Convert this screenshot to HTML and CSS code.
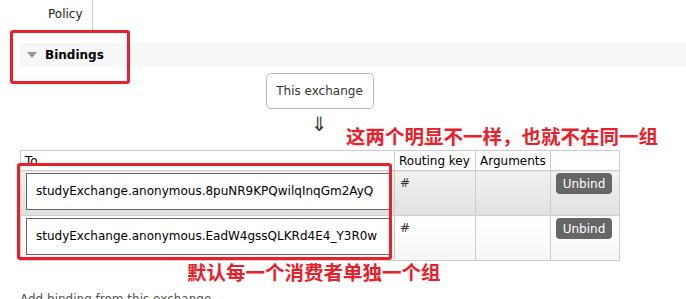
FILE: index.html
```html
<!DOCTYPE html>
<html lang="zh-CN">
<head>
    <meta charset="UTF-8">
    <title>Bindings</title>
    <link rel="stylesheet" href="styles.css">
</head>
<body>
    <div class="page">
        <div class="top-row">
            <div class="policy-cell">Policy</div>
        </div>

        <div class="section-head">
            <span class="arrow-down"></span>
            <span class="section-title">Bindings</span>
        </div>

        <div class="bindings">
            <div class="source">
                <div class="exchange-box">This exchange</div>
                <div class="flow-arrow">⇓</div>
            </div>

            <table class="list">
                <thead>
                    <tr>
                        <th class="col-to">To</th>
                        <th class="col-key">Routing key</th>
                        <th class="col-args">Arguments</th>
                        <th class="col-act"></th>
                    </tr>
                </thead>
                <tbody>
                    <tr class="alt1">
                        <td><span class="queue-box">studyExchange.anonymous.8puNR9KPQwilqInqGm2AyQ</span></td>
                        <td>#</td>
                        <td></td>
                        <td><button class="unbind">Unbind</button></td>
                    </tr>
                    <tr class="alt2">
                        <td><span class="queue-box">studyExchange.anonymous.EadW4gssQLKRd4E4_Y3R0w</span></td>
                        <td>#</td>
                        <td></td>
                        <td><button class="unbind">Unbind</button></td>
                    </tr>
                </tbody>
            </table>

            <div class="add-binding">Add binding from this exchange</div>
        </div>

        <!-- 標註 -->
        <div class="mark mark-head"></div>
        <div class="mark mark-queues"></div>
        <div class="note note-top">这两个明显不一样，也就不在同一组</div>
        <div class="note note-bottom">默认每一个消费者单独一个组</div>
    </div>
</body>
</html>
```

FILE: styles.css
```css
body {
    margin: 0;
    font-family: "DejaVu Sans", Verdana, sans-serif;
    font-size: 12px;
    color: #000;
    background: #fff;
    overflow: hidden;
}
.page {
    position: relative;
    width: 686px;
    height: 299px;
}
.top-row {
    height: 30px;
}
.policy-cell {
    width: 93px;
    height: 30px;
    padding-left: 48px;
    padding-top: 7px;
    box-sizing: border-box;
    border-right: 1px solid #ccc;
    color: #222;
}
.section-head {
    margin: 13px 0 0 20px;
    height: 24px;
    background: #f7f7f7;
    display: flex;
    align-items: center;
}
.arrow-down {
    width: 0;
    height: 0;
    margin-left: 7px;
    border-left: 5px solid transparent;
    border-right: 5px solid transparent;
    border-top: 6px solid #999;
}
.section-title {
    font-weight: bold;
    margin-left: 8px;
}
.bindings {
    margin-left: 20px;
    width: 599px;
}
.source {
    display: flex;
    flex-direction: column;
    align-items: center;
    padding-top: 6px;
}
.exchange-box {
    width: 108px;
    height: 36px;
    box-sizing: border-box;
    border: 1px solid #bbb;
    border-radius: 5px;
    display: flex;
    align-items: center;
    justify-content: center;
    color: #333;
}
.flow-arrow {
    font-size: 20px;
    line-height: 24px;
    padding-top: 3px;
    height: 38px;
    color: #333;
}
.list {
    border-collapse: collapse;
    width: 600px;
}
.list th {
    font-weight: normal;
    text-align: left;
    height: 19px;
    padding: 0 4px;
    border: 1px solid #ccc;
    color: #000;
}
.col-to { width: 365px; }
.col-key { width: 72px; }
.col-args { width: 66px; }
.list td {
    border: 1px solid #ccc;
    vertical-align: top;
    padding: 2px 4px 5px 5px;
}
.list tr.alt1 td {
    background: linear-gradient(#f2f2f2, #e0e0e0);
}
.list tr.alt2 td {
    background: linear-gradient(#fff, #f6f6f6);
}
.list td:first-child {
    padding: 2px 0 5px 5px;
}
.queue-box {
    display: block;
    height: 37px;
    box-sizing: border-box;
    border: 1px solid #666;
    background: #fff;
    padding: 10px 0 0 9px;
    margin-right: 3px;
    color: #000;
    white-space: nowrap;
}
.list td:nth-child(2) {
    padding-top: 5px;
    color: #333;
}
.unbind {
    display: block;
    font-family: "DejaVu Sans", Verdana, sans-serif;
    font-size: 12px;
    background: #666;
    color: #fff;
    border: none;
    border-radius: 4px;
    width: 56px;
    height: 21px;
    padding: 0;
    margin-top: 0;
}
.add-binding {
    margin-top: 31px;
    color: #555;
}
.mark {
    position: absolute;
    border: 3px solid #e8202a;
    border-radius: 3px;
    box-sizing: border-box;
}
.mark-head {
    left: 10px;
    top: 30px;
    width: 120px;
    height: 54px;
}
.mark-queues {
    left: 17px;
    top: 163px;
    width: 375px;
    height: 97px;
}
.note {
    position: absolute;
    color: #e8202a;
    font-family: "Noto Sans CJK SC", sans-serif;
    font-weight: bold;
    font-size: 19.5px;
    line-height: 24px;
    white-space: nowrap;
}
.note-top {
    left: 346px;
    top: 124px;
}
.note-bottom {
    left: 187px;
    top: 260px;
}
```
